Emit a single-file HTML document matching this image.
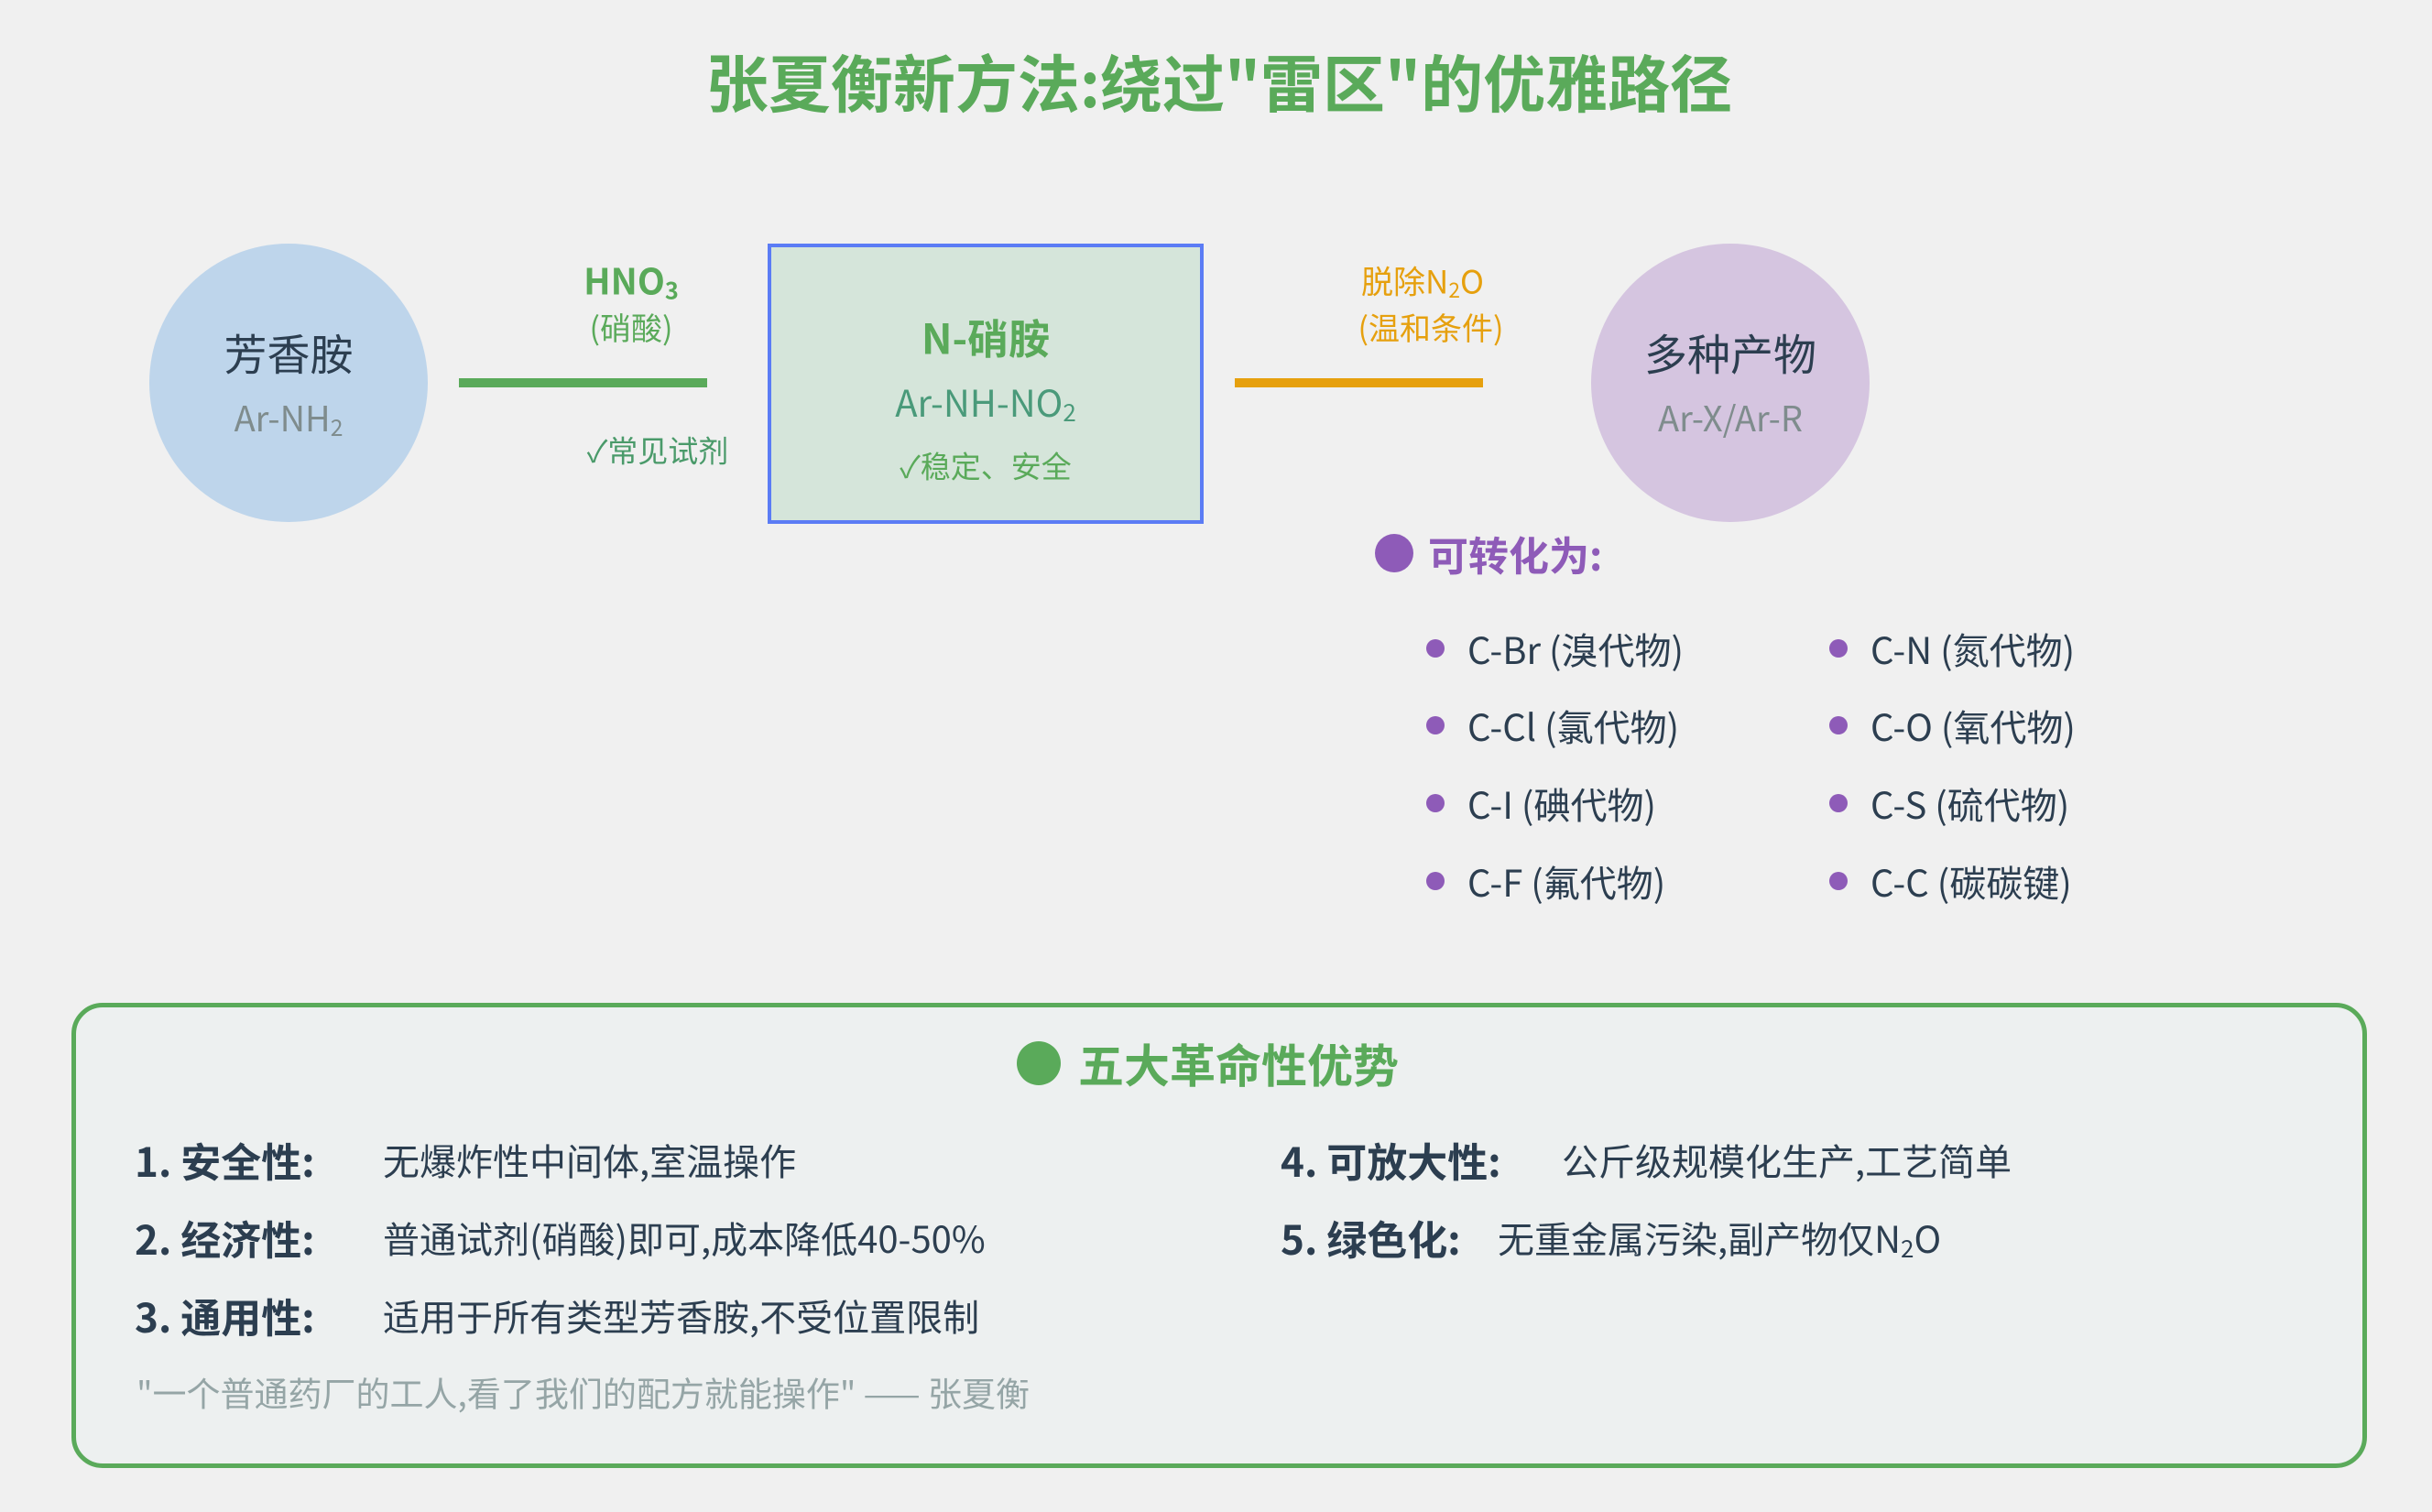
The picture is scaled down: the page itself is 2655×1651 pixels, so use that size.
<!DOCTYPE html>
<html><head><meta charset="utf-8"><style>
*{margin:0;padding:0;box-sizing:border-box}
body{width:2655px;height:1651px;background:#f0f0f0;position:relative;overflow:hidden;font-family:"Noto Sans CJK SC","Liberation Sans",sans-serif;color:#2c3e50}
.a{position:absolute;line-height:1;white-space:nowrap}
.c{transform:translate(-50%,-50%)}
.l{transform:translateY(-50%)}
.b{font-weight:bold}
sub{font-size:0.65em;vertical-align:-0.2em;line-height:0}
.dot{position:absolute;border-radius:50%}
</style></head><body>
<div class="a c b" style="left:1331px;top:88px;font-size:68px;color:#5aaa5a">张夏衡新方法:绕过"雷区"的优雅路径</div>

<div class="dot" style="left:163px;top:266px;width:304px;height:304px;background:#bed5eb"></div>
<div class="a c" style="left:315px;top:384px;font-size:47px">芳香胺</div>
<div class="a c" style="left:315px;top:455px;font-size:38px;color:#7f8c8d">Ar-NH<sub>2</sub></div>

<div class="a c b" style="left:689px;top:306px;font-size:39px;color:#5aaa5a">HNO<sub>3</sub></div>
<div class="a c" style="left:689px;top:357px;font-size:34px;color:#5aaa5a">(硝酸)</div>
<div style="position:absolute;left:501px;top:413px;width:271px;height:10px;background:#5aaa5a"></div>
<div class="a c" style="left:718px;top:491px;font-size:33px;color:#4a9a6a">✓常见试剂</div>

<div style="position:absolute;left:838px;top:266px;width:476px;height:306px;background:#d5e5da;border:4px solid #5b7cf5"></div>
<div class="a c b" style="left:1076px;top:367px;font-size:45px;color:#5aaa5a">N-硝胺</div>
<div class="a c" style="left:1076px;top:438px;font-size:40px;color:#4a9a7a">Ar-NH-NO<sub>2</sub></div>
<div class="a c" style="left:1076px;top:508px;font-size:33px;color:#5aaa5a">✓稳定、安全</div>

<div style="position:absolute;left:1348px;top:413px;width:271px;height:10px;background:#e6a00e"></div>
<div class="a c" style="left:1553px;top:306px;font-size:35px;color:#e6a00e">脱除N<sub>2</sub>O</div>
<div class="a c" style="left:1562px;top:357px;font-size:34px;color:#e6a00e">(温和条件)</div>

<div class="dot" style="left:1737px;top:266px;width:304px;height:304px;background:#d5c5e0"></div>
<div class="a c" style="left:1889px;top:384px;font-size:47px">多种产物</div>
<div class="a c" style="left:1889px;top:455px;font-size:38px;color:#7f8c8d">Ar-X/Ar-R</div>

<div class="dot" style="left:1501px;top:583px;width:42px;height:42px;background:#8e5bb8"></div>
<div class="a l b" style="left:1559px;top:604px;font-size:44px;color:#8e5bb8">可转化为:</div>

<div class="dot" style="left:1557px;top:698px;width:20px;height:20px;background:#8e5bb8"></div>
<div class="a l" style="left:1602px;top:708px;font-size:40px">C-Br (溴代物)</div>
<div class="dot" style="left:1557px;top:782px;width:20px;height:20px;background:#8e5bb8"></div>
<div class="a l" style="left:1602px;top:792px;font-size:40px">C-Cl (氯代物)</div>
<div class="dot" style="left:1557px;top:867px;width:20px;height:20px;background:#8e5bb8"></div>
<div class="a l" style="left:1602px;top:877px;font-size:40px">C-I (碘代物)</div>
<div class="dot" style="left:1557px;top:952px;width:20px;height:20px;background:#8e5bb8"></div>
<div class="a l" style="left:1602px;top:962px;font-size:40px">C-F (氟代物)</div>
<div class="dot" style="left:1997px;top:698px;width:20px;height:20px;background:#8e5bb8"></div>
<div class="a l" style="left:2042px;top:708px;font-size:40px">C-N (氮代物)</div>
<div class="dot" style="left:1997px;top:782px;width:20px;height:20px;background:#8e5bb8"></div>
<div class="a l" style="left:2042px;top:792px;font-size:40px">C-O (氧代物)</div>
<div class="dot" style="left:1997px;top:867px;width:20px;height:20px;background:#8e5bb8"></div>
<div class="a l" style="left:2042px;top:877px;font-size:40px">C-S (硫代物)</div>
<div class="dot" style="left:1997px;top:952px;width:20px;height:20px;background:#8e5bb8"></div>
<div class="a l" style="left:2042px;top:962px;font-size:40px">C-C (碳碳键)</div>

<div style="position:absolute;left:78px;top:1095px;width:2506px;height:508px;background:#edf0f0;border:5px solid #5aaa5a;border-radius:34px"></div>
<div class="dot" style="left:1110px;top:1137px;width:48px;height:48px;background:#5aaa5a"></div>
<div class="a l b" style="left:1177px;top:1161px;font-size:50px;color:#5aaa5a">五大革命性优势</div>

<div class="a l b" style="left:147px;top:1266px;font-size:44px">1. 安全性:</div>
<div class="a l" style="left:418px;top:1266px;font-size:40px">无爆炸性中间体,室温操作</div>
<div class="a l b" style="left:147px;top:1351px;font-size:44px">2. 经济性:</div>
<div class="a l" style="left:418px;top:1351px;font-size:40px">普通试剂(硝酸)即可,成本降低40-50%</div>
<div class="a l b" style="left:147px;top:1436px;font-size:44px">3. 通用性:</div>
<div class="a l" style="left:418px;top:1436px;font-size:40px">适用于所有类型芳香胺,不受位置限制</div>
<div class="a l b" style="left:1398px;top:1266px;font-size:44px">4. 可放大性:</div>
<div class="a l" style="left:1705px;top:1266px;font-size:40px">公斤级规模化生产,工艺简单</div>
<div class="a l b" style="left:1398px;top:1351px;font-size:44px">5. 绿色化:</div>
<div class="a l" style="left:1635px;top:1351px;font-size:40px">无重金属污染,副产物仅N<sub>2</sub>O</div>
<div class="a l" style="left:149px;top:1520px;font-size:37px;color:#95a5a6">"一个普通药厂的工人,看了我们的配方就能操作" —— 张夏衡</div>
</body></html>
